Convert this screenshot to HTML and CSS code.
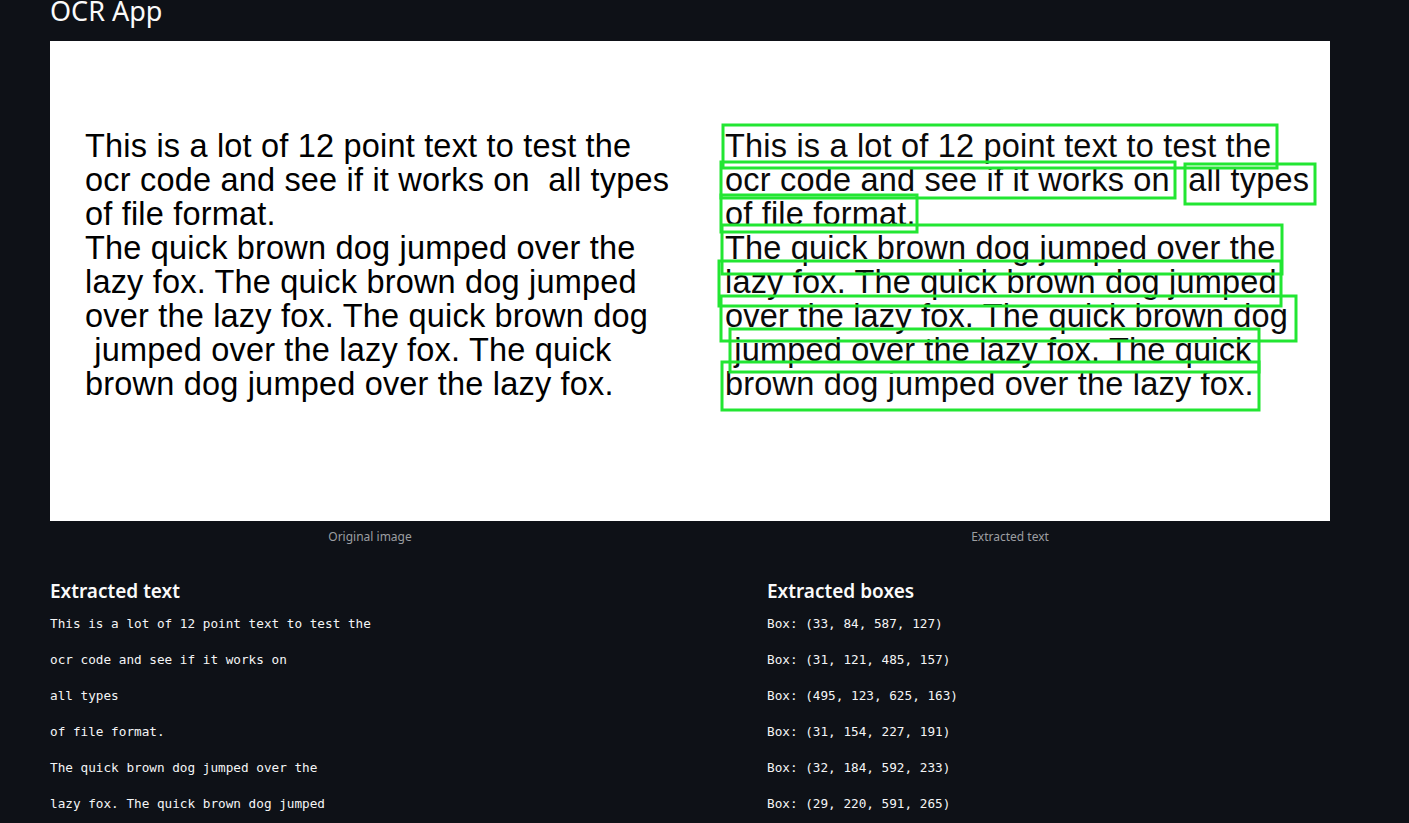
FILE: index.html
```html
<!DOCTYPE html>
<html lang="en">
<head>
<meta charset="utf-8">
<title>OCR App</title>
<link rel="stylesheet" href="styles.css">
</head>
<body>
<main class="main">
  <h1 class="title">OCR App</h1>

  <div class="gallery">
    <figure class="fig">
      <div class="img">
        <div class="doc">This is a lot of 12 point text to test the
ocr code and see if it works on  all types
of file format.
The quick brown dog jumped over the
lazy fox. The quick brown dog jumped
over the lazy fox. The quick brown dog
 jumped over the lazy fox. The quick
brown dog jumped over the lazy fox.</div>
      </div>
      <figcaption class="caption">Original image</figcaption>
    </figure>
    <figure class="fig">
      <div class="img">
        <div class="doc doc-soft">This is a lot of 12 point text to test the
ocr code and see if it works on  all types
of file format.
The quick brown dog jumped over the
lazy fox. The quick brown dog jumped
over the lazy fox. The quick brown dog
 jumped over the lazy fox. The quick
brown dog jumped over the lazy fox.</div>
        <svg class="boxes" viewBox="0 0 640 480" width="640" height="480" aria-hidden="true">
          <g fill="none" stroke="#22e632" stroke-width="3">
            <rect x="33" y="84" width="554" height="43"/>
            <rect x="31" y="121" width="454" height="36"/>
            <rect x="495" y="123" width="130" height="40"/>
            <rect x="31" y="154" width="196" height="37"/>
            <rect x="32" y="184" width="560" height="49"/>
            <rect x="29" y="220" width="562" height="45"/>
            <rect x="31" y="255" width="575" height="45"/>
            <rect x="40" y="288" width="529" height="43"/>
            <rect x="32" y="321" width="537" height="48"/>
          </g>
        </svg>
      </div>
      <figcaption class="caption">Extracted text</figcaption>
    </figure>
  </div>

  <div class="results">
    <section class="col">
      <h3 class="heading">Extracted text</h3>
      <div class="mono">This is a lot of 12 point text to test the</div>
      <div class="mono">ocr code and see if it works on</div>
      <div class="mono">all types</div>
      <div class="mono">of file format.</div>
      <div class="mono">The quick brown dog jumped over the</div>
      <div class="mono">lazy fox. The quick brown dog jumped</div>
      <div class="mono">over the lazy fox. The quick brown dog</div>
      <div class="mono">jumped over the lazy fox. The quick</div>
      <div class="mono">brown dog jumped over the lazy fox.</div>
    </section>
    <section class="col">
      <h3 class="heading">Extracted boxes</h3>
      <div class="mono">Box: (33, 84, 587, 127)</div>
      <div class="mono">Box: (31, 121, 485, 157)</div>
      <div class="mono">Box: (495, 123, 625, 163)</div>
      <div class="mono">Box: (31, 154, 227, 191)</div>
      <div class="mono">Box: (32, 184, 592, 233)</div>
      <div class="mono">Box: (29, 220, 591, 265)</div>
      <div class="mono">Box: (31, 255, 606, 300)</div>
      <div class="mono">Box: (40, 288, 569, 331)</div>
      <div class="mono">Box: (32, 321, 569, 369)</div>
    </section>
  </div>
</main>
</body>
</html>
```

FILE: styles.css
```css
html, body {
  margin: 0;
  padding: 0;
  background: #0e1117;
  color: #fafafa;
  font-family: "Noto Sans", "Open Sans", sans-serif;
  overflow: hidden;
}

.main {
  padding-left: 50px;
  width: 1280px;
}

.title {
  margin: -6px 0 13px 0;
  font-size: 27px;
  line-height: 34px;
  font-weight: 400;
  color: #fafafa;
}

.gallery {
  display: flex;
}

.fig {
  margin: 0;
  width: 640px;
  display: flex;
  flex-direction: column;
  align-items: center;
}

.img {
  position: relative;
  width: 640px;
  height: 480px;
  background: #ffffff;
  overflow: hidden;
}

.doc {
  padding: 88px 0 0 35px;
  white-space: pre;
  font-family: "Liberation Sans", Arial, sans-serif;
  font-size: 32.5px;
  letter-spacing: 0.19px;
  line-height: 34px;
  color: #000000;
}

.doc-soft {
  color: #0a0a0a;
}

.boxes {
  position: absolute;
  left: 0;
  top: 0;
}

.caption {
  padding-top: 8px;
  font-size: 12px;
  line-height: 16px;
  color: #9c9ea1;
}

.results {
  display: grid;
  grid-template-columns: 717px 1fr;
  margin-top: 32px;
}

.col {
  display: flex;
  flex-direction: column;
}

.heading {
  margin: 0 0 9px 0;
  font-size: 19px;
  line-height: 28px;
  font-weight: 600;
  color: #fafafa;
}

.mono {
  font-family: "DejaVu Sans Mono", "Liberation Mono", monospace;
  font-size: 12.7px;
  line-height: 20px;
  height: 20px;
  margin-bottom: 16px;
  white-space: pre;
  color: #f4f5f6;
}
```
